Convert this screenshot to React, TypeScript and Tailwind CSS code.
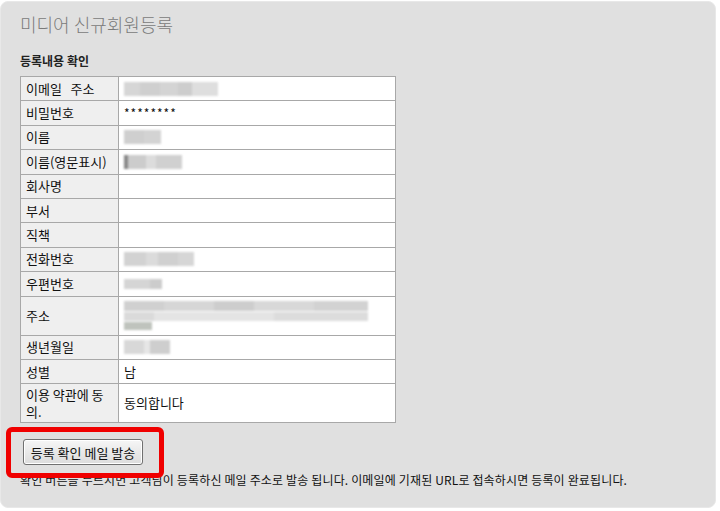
import React from "react";

const font = { fontFamily: '"Noto Sans CJK KR", "Noto Sans", sans-serif' };

function Blur({ blocks }: { blocks: { w: number; c: string }[] }) {
  return (
    <div className="flex h-[14px] blur-[1px]">
      {blocks.map((b, i) => (
        <div key={i} style={{ width: b.w, background: b.c }} />
      ))}
    </div>
  );
}

const rows: { label: React.ReactNode; value: React.ReactNode; tall?: boolean }[] = [
  {
    label: "이메일   주소",
    value: (
      <Blur
        blocks={[
          { w: 16, c: "#d6d6d6" },
          { w: 20, c: "#cfcfcf" },
          { w: 18, c: "#d4d4d4" },
          { w: 14, c: "#cdcdcd" },
          { w: 26, c: "#dedede" },
        ]}
      />
    ),
  },
  { label: "비밀번호", value: <span className="text-[12px] tracking-[1px]">********</span> },
  {
    label: "이름",
    value: (
      <Blur
        blocks={[
          { w: 20, c: "#cfcfcf" },
          { w: 17, c: "#d3d3d3" },
        ]}
      />
    ),
  },
  {
    label: "이름(영문표시)",
    value: (
      <Blur
        blocks={[
          { w: 4, c: "#888" },
          { w: 18, c: "#cccccc" },
          { w: 10, c: "#dcdcdc" },
          { w: 26, c: "#d0d0d0" },
        ]}
      />
    ),
  },
  { label: "회사명", value: null },
  { label: "부서", value: null },
  { label: "직책", value: null },
  {
    label: "전화번호",
    value: (
      <Blur
        blocks={[
          { w: 22, c: "#d2d2d2" },
          { w: 12, c: "#dbdbdb" },
          { w: 20, c: "#d0d0d0" },
          { w: 16, c: "#d6d6d6" },
        ]}
      />
    ),
  },
  {
    label: "우편번호",
    value: (
      <div className="flex h-[10px] blur-[1px]">
        <div className="w-[26px] bg-[#d5d5d5]" />
        <div className="w-[12px] bg-[#cccccc]" />
      </div>
    ),
  },
  {
    label: "주소",
    tall: true,
    value: (
      <div className="flex flex-col gap-[1px] blur-[1px]">
        <div className="flex h-[10px]">
          <div className="w-[40px] bg-[#d0d0d0]" />
          <div className="w-[50px] bg-[#d6d6d6]" />
          <div className="w-[40px] bg-[#cdcdcd]" />
          <div className="w-[60px] bg-[#d8d8d8]" />
          <div className="w-[54px] bg-[#d2d2d2]" />
        </div>
        <div className="flex h-[9px]">
          <div className="w-[30px] bg-[#dadada]" />
          <div className="w-[120px] bg-[#e4e4e4]" />
          <div className="w-[94px] bg-[#dcdcdc]" />
        </div>
        <div className="flex h-[8px]">
          <div className="w-[28px] bg-[#bfc3bd]" />
        </div>
      </div>
    ),
  },
  {
    label: "생년월일",
    value: (
      <Blur
        blocks={[
          { w: 20, c: "#d8d8d8" },
          { w: 6, c: "#e6e6e6" },
          { w: 20, c: "#cecece" },
        ]}
      />
    ),
  },
  { label: "성별", value: "남" },
  {
    label: (
      <span className="block leading-[17px]">
        이용 약관에 동
        <br />
        의.
      </span>
    ),
    value: "동의합니다",
    tall: true,
  },
];

export default function App() {
  return (
    <div className="w-[720px] h-[511px] bg-white" style={font}>
      <div className="relative mt-[1px] w-[716px] h-[507px] rounded-[8px] bg-[#e0e0e0] border border-[#e8e8e8] pl-[19px] pt-[10px]">
        <div className="text-[18px] leading-[24px] text-[#7a7a7a] font-light">미디어 신규회원등록</div>
        <div className="mt-[17px] text-[12px] leading-[16px] font-bold text-[#222]">등록내용 확인</div>
        <table className="mt-[7px] border-collapse text-[13px] text-[#111]">
          <tbody>
            {rows.map((r, i) => (
              <tr key={i} className={r.tall ? "h-[39px]" : "h-[24.4px]"}>
                <td className="w-[98px] border border-[#a8a8a8] bg-[#efefef] px-[5px] py-0 align-middle leading-[16px] whitespace-pre">
                  {r.label}
                </td>
                <td className="w-[277px] border border-[#a8a8a8] bg-white px-[5px] py-0 align-middle leading-[16px]">
                  {r.value}
                </td>
              </tr>
            ))}
          </tbody>
        </table>
        <button className="mt-[16px] ml-[3px] h-[26px] w-[120px] rounded-[3px] border border-[#707070] bg-gradient-to-b from-[#f6f6f6] to-[#dcdcdc] text-[13px] text-[#111] shadow-[inset_0_0_0_1px_#fff]">
          등록 확인 메일 발송
        </button>
        <div className="mt-[7px] text-[12px] leading-[16px] tracking-[0.15px] text-[#111]">
          확인 버튼을 누르시면 고객님이 등록하신 메일 주소로 발송 됩니다. 이메일에 기재된 URL로 접속하시면 등록이 완료됩니다.
        </div>
        <div className="absolute left-[5px] top-[425px] w-[158px] h-[51px] rounded-[6px] border-[5px] border-[#f00000]" />
      </div>
    </div>
  );
}
